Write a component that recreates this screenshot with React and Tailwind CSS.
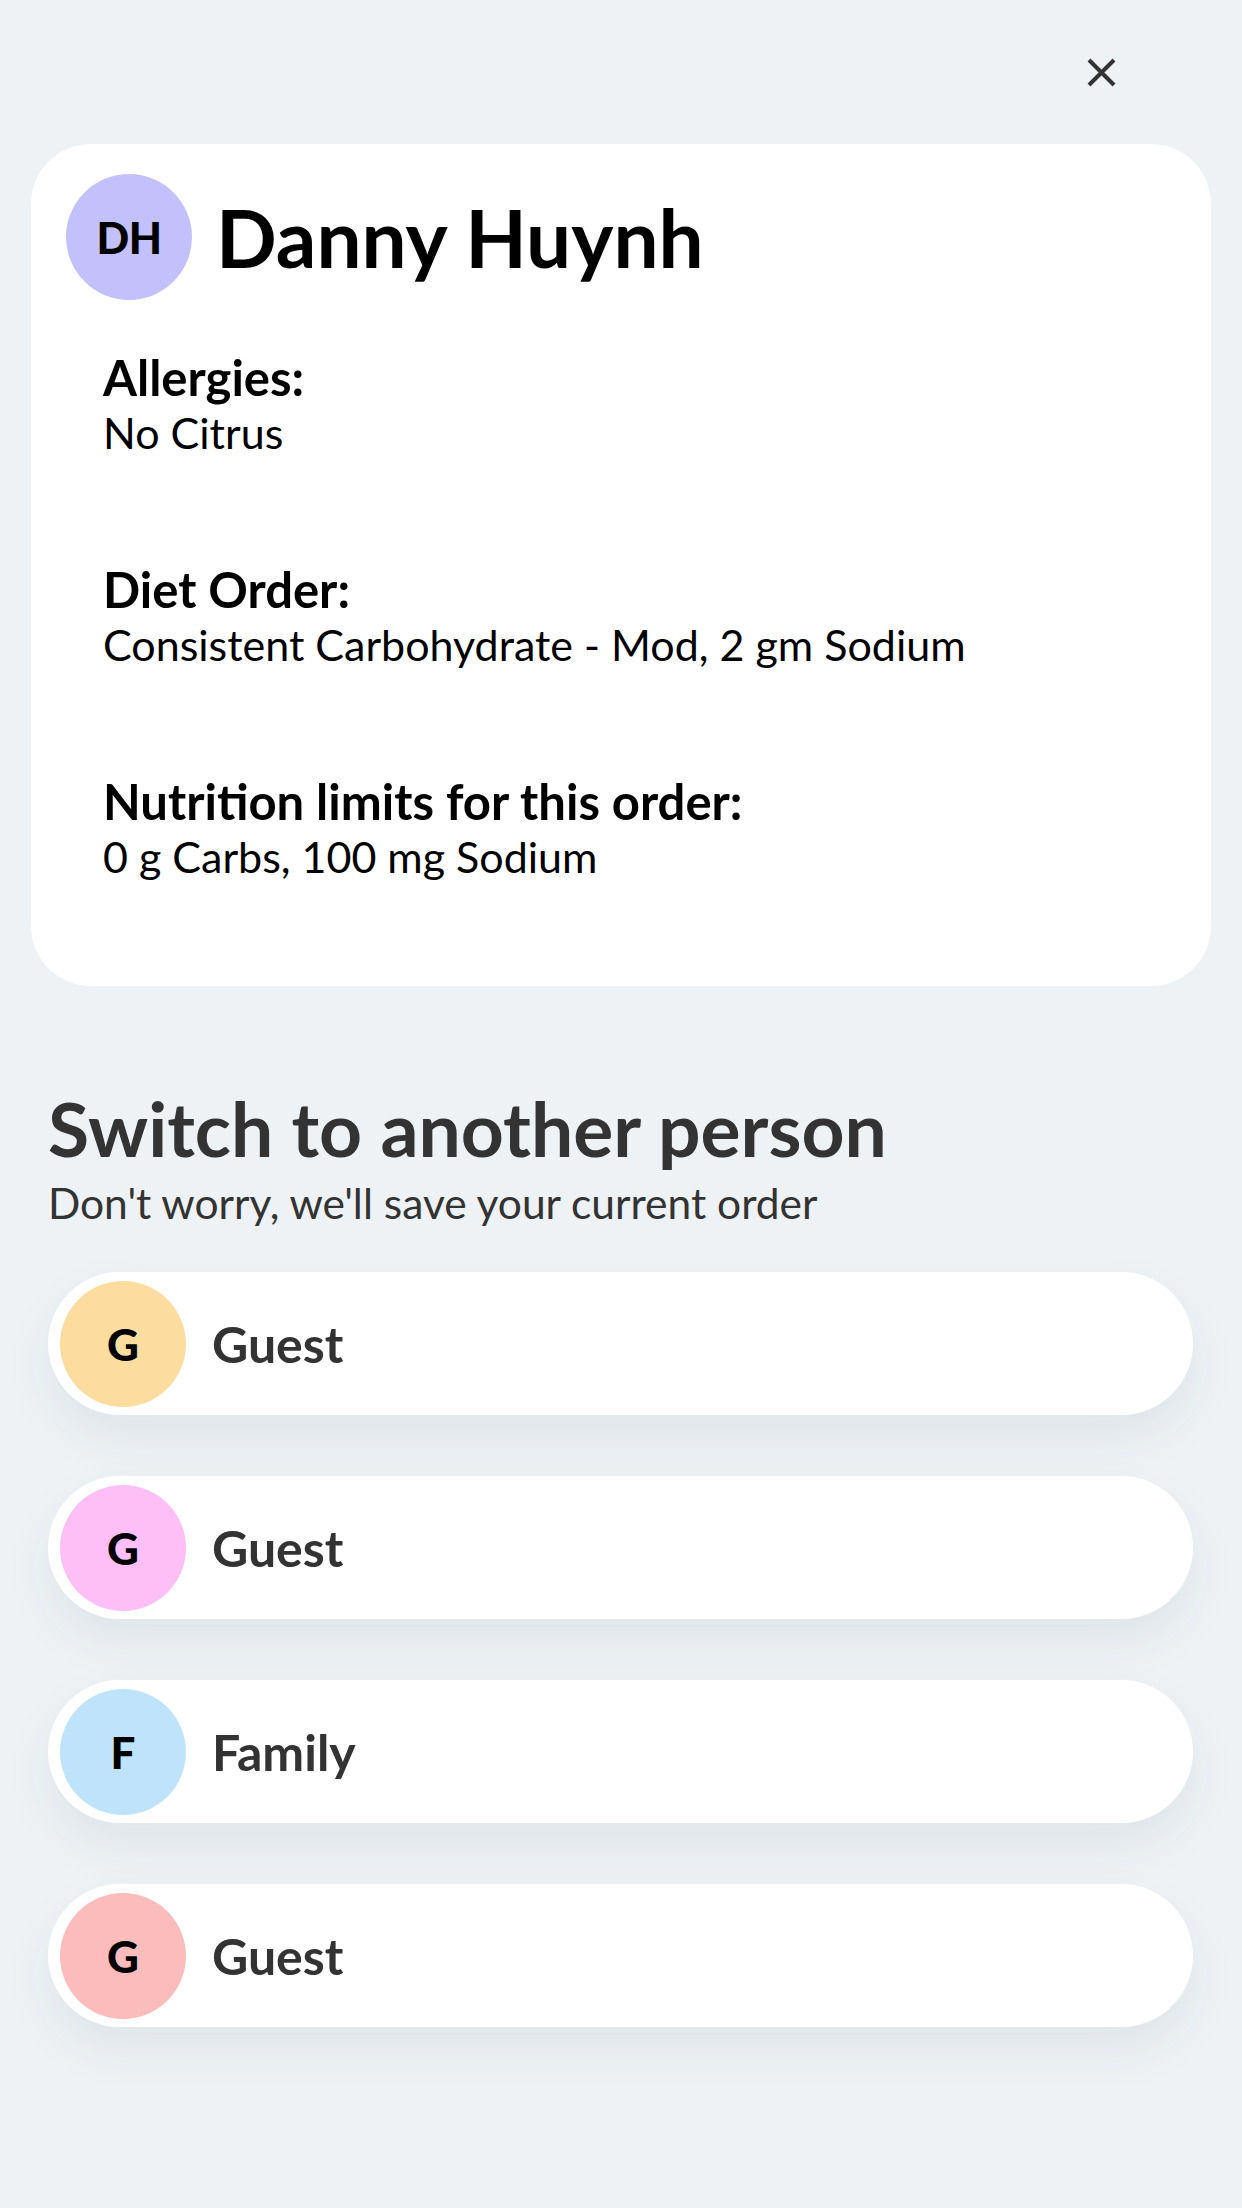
import React from "react";

const me = {
  initials: "DH",
  name: "Danny Huynh",
  color: "bg-[#c3c0fc]",
  details: [
    { label: "Allergies:", value: "No Citrus" },
    { label: "Diet Order:", value: "Consistent Carbohydrate - Mod, 2 gm Sodium" },
    { label: "Nutrition limits for this order:", value: "0 g Carbs, 100 mg Sodium" },
  ],
};

const people = [
  { id: 1, initial: "G", name: "Guest", color: "bg-[#fddc9f]" },
  { id: 2, initial: "G", name: "Guest", color: "bg-[#fdbff5]" },
  { id: 3, initial: "F", name: "Family", color: "bg-[#bee3fb]" },
  { id: 4, initial: "G", name: "Guest", color: "bg-[#fdbcbc]" },
];

const CloseIcon = () => (
  <svg width="29" height="29" viewBox="0 0 29 29" fill="none">
    <path d="M2 2L27 27M27 2L2 27" stroke="#333" strokeWidth="4" />
  </svg>
);

const PersonRow = ({ person }) => (
  <button className="flex h-[143px] w-full items-center rounded-full bg-white pl-[12px] text-left shadow-[0_22px_50px_rgba(40,50,70,0.07)]">
    <div
      className={`flex h-[126px] w-[126px] shrink-0 items-center justify-center rounded-full ${person.color}`}
    >
      <span className="text-[44px] font-black leading-none text-black">
        {person.initial}
      </span>
    </div>
    <span className="ml-[26px] text-[50px] font-bold leading-none text-[#333]">
      {person.name}
    </span>
  </button>
);

export default function App() {
  return (
    <div className="min-h-[2208px] w-full bg-[#eef2f5] font-['Lato',sans-serif]">
      <div className="flex h-[144px] items-center justify-end pr-[126px]">
        <CloseIcon />
      </div>

      <div className="mx-[31px] rounded-[60px] bg-white px-[35px] pb-[103px] pt-[30px]">
        <div className="flex items-center">
          <div
            className={`flex h-[126px] w-[126px] shrink-0 items-center justify-center rounded-full ${me.color}`}
          >
            <span className="text-[43px] font-black leading-none tracking-[-0.5px] text-black">
              {me.initials}
            </span>
          </div>
          <h1 className="ml-[24px] text-[80px] font-bold leading-none text-black">
            {me.name}
          </h1>
        </div>

        <div className="mt-[51px] flex flex-col gap-[104px] px-[37px]">
          {me.details.map((d) => (
            <div key={d.label} className="text-black">
              <p className="text-[49px] font-bold leading-[52px]">{d.label}</p>
              <p className="mt-[4px] text-[43px] leading-[52px]">{d.value}</p>
            </div>
          ))}
        </div>
      </div>

      <div className="px-[48px] pt-[101px]">
        <h2 className="text-[75px] font-bold leading-[83px] text-[#333]">
          Switch to another person
        </h2>
        <p className="mt-[9px] text-[42.5px] leading-[48px] text-[#333]">
          Don't worry, we'll save your current order
        </p>

        <div className="mt-[45px] flex flex-col gap-[61px] pr-[1px]">
          {people.map((p) => (
            <PersonRow key={p.id} person={p} />
          ))}
        </div>
      </div>
    </div>
  );
}
